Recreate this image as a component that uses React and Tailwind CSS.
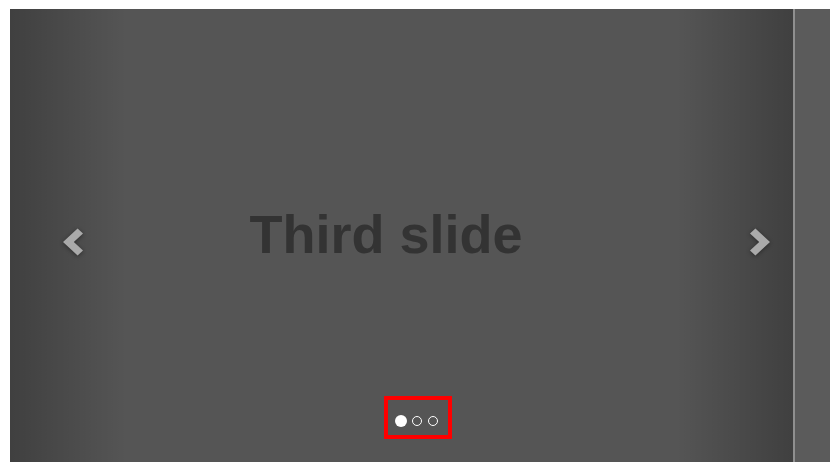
import React from "react";

function Chevron({ dir }) {
  const pts =
    dir === "left"
      ? "0,14 13.5,0.5 18.5,5.5 10,14 18.5,22.5 13.5,27.5"
      : "18.5,14 5,0.5 0,5.5 8.5,14 0,22.5 5,27.5";
  return (
    <svg
      width="20"
      height="28"
      viewBox="0 0 18.5 28"
      preserveAspectRatio="none"
      className="block drop-shadow-[0_1px_2px_rgba(0,0,0,0.4)]"
    >
      <polygon points={pts} fill="#aaaaaa" />
    </svg>
  );
}

export default function App() {
  return (
    <div className="w-[830px] h-[470px] bg-white pt-[9px] pl-[10px] flex items-start">
      <div className="relative w-[783px] h-[453px] bg-[#555555] overflow-hidden flex items-center justify-center pr-[31px] pb-[4px]">
        <span
          className="font-bold text-[54px] leading-none text-[#333333]"
          style={{ fontFamily: '"Liberation Sans", Arial, sans-serif' }}
        >
          Third slide
        </span>

        <div className="absolute left-0 top-0 bottom-0 w-[15%] bg-[linear-gradient(to_right,rgba(0,0,0,0.25),rgba(0,0,0,0))]" />
        <div className="absolute right-0 top-0 bottom-0 w-[15%] bg-[linear-gradient(to_right,rgba(0,0,0,0),rgba(0,0,0,0.25))]" />

        <div className="absolute left-[53px] top-[219px]">
          <Chevron dir="left" />
        </div>
        <div className="absolute left-[740px] top-[219px]">
          <Chevron dir="right" />
        </div>

        <div className="absolute left-[385px] top-[406px] flex items-center">
          <span className="block w-[12px] h-[12px] rounded-full bg-white" />
          <span className="block w-[10px] h-[10px] rounded-full border border-white ml-[5px]" />
          <span className="block w-[10px] h-[10px] rounded-full border border-white ml-[6px]" />
        </div>

        <div className="absolute left-[374px] top-[387px] w-[68px] h-[43px] border-4 border-[#ff0000]" />
      </div>
      <div className="w-[2px] h-[453px] bg-[#8f8f8f]" />
      <div className="flex-1 h-[453px] bg-[#5b5b5b]" />
    </div>
  );
}
